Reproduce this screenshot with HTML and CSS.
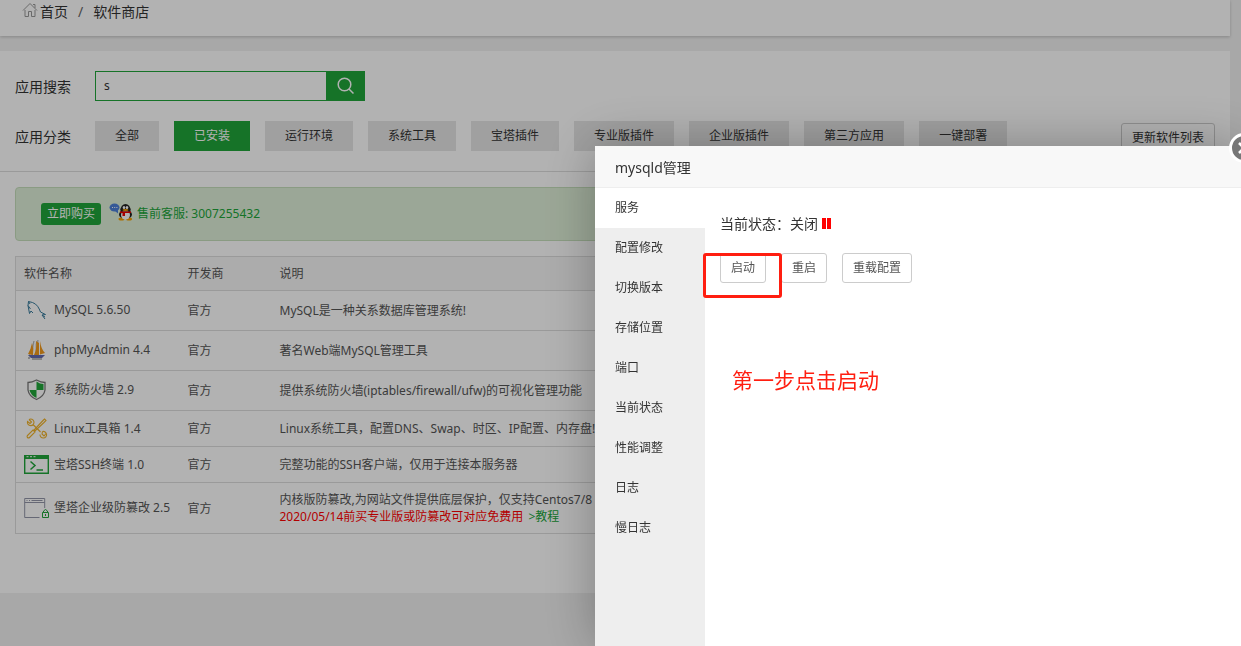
FILE: index.html
```html
<!DOCTYPE html>
<html lang="zh-CN">
<head>
<meta charset="utf-8">
<title>软件商店</title>
<link rel="stylesheet" href="styles.css">
</head>
<body>
<div class="page">
  <nav class="crumbs">
    <svg class="home" viewBox="0 0 16 16" width="16" height="16"><path d="M1 8.500 8 1.500l7 7M3 8v6.500h3.500v-5h3v5H13V8M11 2.500h2v3.500"/></svg>
    <a href="#">首页</a><span class="sep">/</span><a href="#">软件商店</a>
  </nav>
  <main class="panel">
    <form class="line search-line">
      <label class="label" for="q">应用搜索</label>
      <div class="search">
        <input id="q" type="text" value="s">
        <button type="button" aria-label="搜索"><svg viewBox="0 0 18 18" width="18" height="18"><circle cx="7.500" cy="7.500" r="6.300"/><path d="m12 12 4.500 4.500"/></svg></button>
      </div>
    </form>
    <div class="line type-line">
      <span class="label">应用分类</span>
      <div class="types">
        <button type="button">全部</button>
        <button type="button" class="on">已安装</button>
        <button type="button">运行环境</button>
        <button type="button">系统工具</button>
        <button type="button">宝塔插件</button>
        <button type="button">专业版插件</button>
        <button type="button">企业版插件</button>
        <button type="button">第三方应用</button>
        <button type="button">一键部署</button>
      </div>
      <button type="button" class="btn update">更新软件列表</button>
    </div>
    <div class="body">
      <div class="notice">
        <button type="button" class="buy">立即购买</button>
        <a href="#" class="qq">
          <svg viewBox="0 0 24 18" width="24" height="18">
            <ellipse cx="5.500" cy="4.500" rx="5" ry="4" fill="#4d80d8"/><path d="m6 8 3 2.500V7z" fill="#4d80d8"/>
            <path d="M3 4.500h1M5.200 4.500h1M7.400 4.500h1" stroke="#fff"/>
            <ellipse cx="16.500" cy="11.500" rx="6.500" ry="4.500" fill="#222"/>
            <ellipse cx="12.500" cy="16" rx="3" ry="1.500" fill="#f5a000"/><ellipse cx="20" cy="16" rx="3" ry="1.500" fill="#f5a000"/>
            <ellipse cx="16.500" cy="12" rx="4.500" ry="4.500" fill="#fff"/>
            <path d="M11.500 7a5 6 0 0 1 10 0z" fill="#222"/><rect x="11.500" y="5.500" width="10" height="3" fill="#222"/>
            <ellipse cx="15" cy="4.500" rx="1.300" ry="1.600" fill="#fff"/><ellipse cx="18" cy="4.500" rx="1.300" ry="1.600" fill="#fff"/>
            <ellipse cx="16.500" cy="7" rx="3" ry="1" fill="#f5a000"/>
            <path d="M11 8.500h11V10h-6v3h-2.500v-3H11z" fill="#e00"/>
          </svg>
          <span>售前客服: 3007255432</span>
        </a>
      </div>
      <table class="list">
        <thead><tr><th class="c-name">软件名称</th><th class="c-dev">开发商</th><th>说明</th></tr></thead>
        <tbody>
          <tr class="tall"><td><a href="#" class="soft"><svg viewBox="0 0 25 25" width="25" height="25" fill="none" stroke="#387b9c"><path d="M5.500 16.500 4 8.500 6.500 12M4 8.500 4.500 4.500l4 1C13 7 15 11 16.500 15l5 2.500-3.500.5 3 2M5.500 16.500l1.500-2.500 2 2M18 18l3 4"/><path d="M4.500 4.500 6 7"/></svg>MySQL 5.6.50</a></td><td>官方</td><td>MySQL是一种关系数据库管理系统!</td></tr>
          <tr class="tall"><td><a href="#" class="soft"><svg viewBox="0 0 25 25" width="25" height="25"><path d="M10 4 5 19l3-1zM14 3l-2 4v12h2z" fill="#eee" stroke="#999" stroke-width=".5"/><path d="M8 6Q10 12 9 18l-5-1Q7 12 8 6zM12 4l3 2v13l-5-1Q13 12 12 4zM16 4q1 8 5 12l-5 1.500z" fill="#f29a1b"/><path d="M4 18h17l-3 3H7z" fill="#636bb0"/><path d="M4 21h2m2 1h10" stroke="#777"/></svg>phpMyAdmin 4.4</a></td><td>官方</td><td>著名Web端MySQL管理工具</td></tr>
          <tr class="tall"><td><a href="#" class="soft"><svg viewBox="0 0 25 25" width="25" height="25"><path d="M12.500 3Q8 5.500 4 5.500V13q1 6.500 8.500 9.500Q20 19.500 21 13V5.500Q17 5.500 12.500 3z" fill="#fff" stroke="#777" stroke-width="1.300"/><path d="M12.500 4.500Q16 7 19.500 7v6h-7zM5.500 13h7v8Q6.500 18 5.500 13z" fill="#20a53a"/></svg>系统防火墙 2.9</a></td><td>官方</td><td>提供系统防火墙(iptables/firewall/ufw)的可视化管理功能</td></tr>
          <tr><td><a href="#" class="soft"><svg viewBox="0 0 25 25" width="25" height="25" fill="none" stroke="#f0b32c" stroke-width="1.100"><path d="M5 3.500a3.300 3.300 0 1 1-1.500 2L6 7.500l1.500-1.500L5 3.500M9 8.500l7.500 7.500"/><path d="M18.500 15.500a3.300 3.300 0 1 1-2.500 3M18.500 15.500l-.5 2.500 2 2 2-2.500"/><path d="M20.500 3 22 4.500 20 6.500 11 15 10 14l9-9.500zM9 14l2 2-5.500 5.500a1.300 1.300 0 0 1-2-2z"/></svg>Linux工具箱 1.4</a></td><td>官方</td><td>Linux系统工具<span class="punct">，</span>配置DNS、Swap、时区、IP配置、内存盘!</td></tr>
          <tr><td><a href="#" class="soft"><svg viewBox="0 0 25 25" width="25" height="25"><path d="M.7 4v17.300h23.600V4" fill="none" stroke="#20a53a" stroke-width="1.400"/><path d="M0 3h25v4H0z" fill="#20a53a"/><path d="M2.500 4.700h2m1.500 0h2m1.500 0h2" stroke="#fff"/><path d="m6.500 9.500 4.500 4-4.500 4M12.500 18H19" fill="none" stroke="#20a53a" stroke-width="1.500"/></svg>宝塔SSH终端 1.0</a></td><td>官方</td><td>完整功能的SSH客户端<span class="punct">，</span>仅用于连接本服务器</td></tr>
          <tr class="two"><td><a href="#" class="soft"><svg viewBox="0 0 25 25" width="25" height="25" fill="none"><path d="M15.500 22.500H.7v-19h20v9.500M.7 7.500h20M2.500 5.500h1m1.500 0h1m1.500 0h11" stroke="#9296a8"/><path d="M18.500 17.500h6v5h-6zM19.500 17.500V16q2-3 4 0v1.500M21.500 19v2" stroke="#20a53a"/></svg>堡塔企业级防篡改 2.5</a></td><td>官方</td><td>内核版防篡改,为网站文件提供底层保护<span class="punct">，</span>仅支持Centos7/8<br><span class="red">2020/05/14前买专业版或防篡改可对应免费用</span> <a href="#" class="more">&gt;教程</a></td></tr>
        </tbody>
      </table>
    </div>
  </main>
</div>
<div class="shade"></div>
<section class="dialog" role="dialog" aria-label="mysqld管理">
  <h1>mysqld管理</h1>
  <button type="button" class="close" aria-label="关闭"><svg viewBox="0 0 30 30" width="30" height="30"><circle cx="15" cy="15" r="13.500" fill="#777" stroke="#fff" stroke-width="3"/><path d="m10 10 10 10M20 10 10 20" stroke="#fff" stroke-width="2.500"/></svg></button>
  <div class="split">
    <nav class="menu">
      <a href="#" class="on">服务</a><a href="#">配置修改</a><a href="#">切换版本</a><a href="#">存储位置</a><a href="#">端口</a><a href="#">当前状态</a><a href="#">性能调整</a><a href="#">日志</a><a href="#">慢日志</a>
    </nav>
    <div class="content">
      <p class="status">当前状态<span class="punct">：</span>关闭 <svg viewBox="0 0 9 11" width="9" height="11"><path d="M0 0h4v11H0zM5 0h4v11H5z" fill="#f00"/></svg></p>
      <div class="actions">
        <button type="button" class="btn">启动</button>
        <button type="button" class="btn">重启</button>
        <button type="button" class="btn">重载配置</button>
        <span class="mark"></span>
      </div>
      <p class="tip">第一步点击启动</p>
    </div>
  </div>
</section>
</body>
</html>
```
FILE: styles.css
```css
* { box-sizing: border-box; }
html, body { height: 100%; }
body {
  margin: 0;
  overflow: hidden;
  background: #f1f1f1;
  color: #333;
  font: 12px/18px "Noto Sans", "Noto Sans CJK SC", sans-serif;
}
a { color: inherit; text-decoration: none; }
button, input { font: inherit; color: inherit; }
button { border: 0; margin: 0; cursor: pointer; white-space: nowrap; }
p, h1 { margin: 0; font-weight: 400; }
svg { flex: none; }
.punct { font-family: "Noto Sans CJK TC", sans-serif; line-height: 1; }

.page { padding-right: 11px; }
.crumbs {
  display: flex;
  align-items: center;
  height: 36px;
  padding: 0 22px 12px;
  background: #fff;
  box-shadow: 0 1px 3px rgba(0, 0, 0, .2);
  font-size: 14px;
}
.home { fill: none; stroke: #999; margin-right: 2px; margin-bottom: 4px; }
.sep { margin: 0 10px; color: #666; }
.panel { margin-top: 15px; min-height: 542px; background: #fff; }
.line { display: flex; padding: 0 15px; }
.label { width: 80px; flex: none; font-size: 14px; line-height: 32px; }
.search-line { padding-top: 20px; }
.search { display: flex; height: 30px; }
.search input {
  width: 232px;
  padding: 0 8px;
  border: 1px solid #20a53a;
  background: #fff;
  outline: 0;
}
.search button {
  display: grid;
  place-items: center;
  width: 38px;
  padding: 0;
  background: #20a53a;
}
.search svg { fill: none; stroke: #fff; stroke-width: 1.5; }
.type-line { height: 51px; margin-top: 18px; border-bottom: 1px solid #ddd; }
.types { display: flex; gap: 15px; }
.types button { height: 30px; padding: 0 20px; background: #e5e5e5; }
.types .on { background: #20a53a; color: #fff; }
.btn {
  height: 30px;
  padding: 0 10px;
  border: 1px solid #ccc;
  border-radius: 3px;
  background: #fff;
  color: #555;
}
.update { margin: 2px 0 0 auto; color: #333; }
.body { padding: 15px; }
.notice {
  display: flex;
  align-items: center;
  gap: 8px;
  height: 54px;
  padding: 0 25px;
  border: 1px solid #c6dfbc;
  border-radius: 4px;
  background: #dff0d8;
}
.buy { height: 22px; padding: 0 6px; border-radius: 3px; background: #20a53a; color: #fff; line-height: 22px; }
.qq { display: flex; gap: 4px; color: #20a53a; }
.qq svg { margin-top: -2px; }

.list { width: 100%; margin-top: 15px; border-collapse: collapse; border: 1px solid #ddd; color: #555; table-layout: fixed; }
.list th { height: 34px; font-weight: 400; text-align: left; background: #f6f6f6; }
.list th, .list td { padding: 0 8px; border-bottom: 1px solid #ddd; white-space: nowrap; }
.list td { height: 36px; line-height: 17px; }
.list .tall td { height: 40px; }
.list .two td { height: 51px; }
.c-name { width: 164px; }
.c-dev { width: 92px; }
.soft { display: flex; align-items: center; gap: 5px; margin-bottom: 1px; }
.tall .soft { margin-bottom: 3px; }
.red { color: #f00; }
.more { color: #20a53a; margin-left: 2px; }

.shade { position: fixed; inset: 0; background: rgba(0, 0, 0, .3); }
.dialog {
  position: fixed;
  left: 595px;
  right: 0;
  top: 146px;
  bottom: 0;
  display: flex;
  flex-direction: column;
  background: #fff;
  box-shadow: 1px 1px 50px rgba(0, 0, 0, .3);
}
.dialog h1 {
  height: 42px;
  padding: 0 20px;
  border-bottom: 1px solid #eee;
  background: #f8f8f8;
  font-size: 14px;
  line-height: 43px;
}
.close { position: absolute; top: -13px; right: -18px; padding: 0; background: none; }
.close svg { display: block; }
.split { display: flex; flex: 1; }
.menu { width: 110px; background: #eee; }
.menu a { display: block; padding-left: 20px; line-height: 40px; height: 40px; }
.menu .on { background: #fff; }
.content { flex: 1; padding: 25px 15px; }
.status { font-size: 14px; line-height: 22px; }
.actions { position: relative; display: flex; gap: 15px; margin-top: 18px; }
.mark {
  position: absolute;
  left: -17px;
  top: 0;
  width: 79px;
  height: 45px;
  border: 3px solid #ff1e10;
  border-radius: 3px;
}
.tip { margin: 82px 0 0 12px; color: #ff1e10; font-size: 21px; line-height: 30px; }
```
